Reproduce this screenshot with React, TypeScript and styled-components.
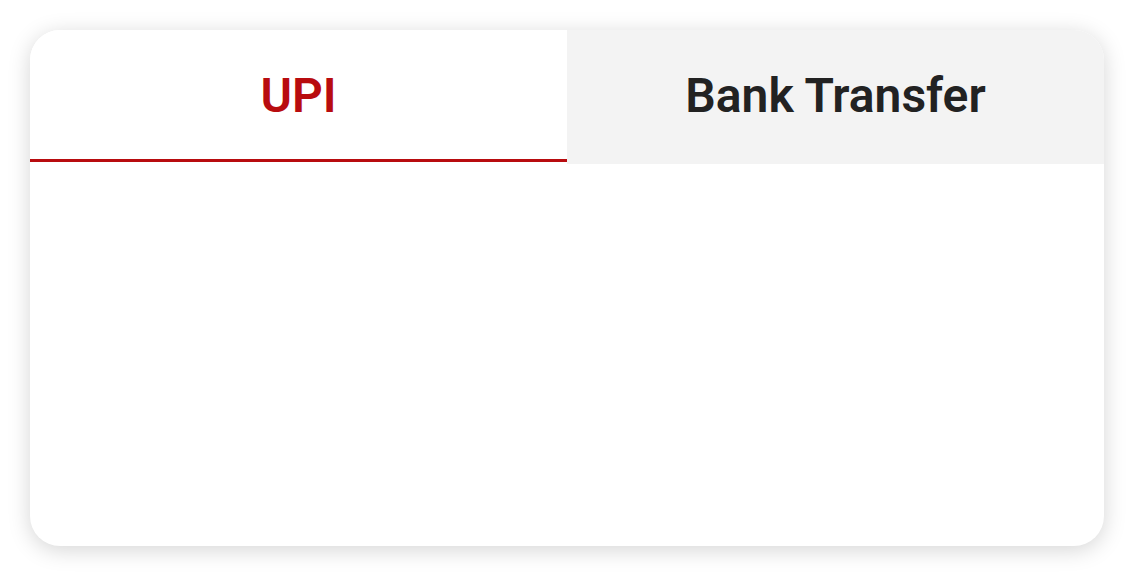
import { useState } from 'react';
import styled, { createGlobalStyle } from 'styled-components';

const GlobalStyle = createGlobalStyle`
  html, body {
    margin: 0;
    padding: 0;
    background: #ffffff;
    font-family: Roboto, "Liberation Sans", sans-serif;
  }
`;

const Page = styled.div`
  padding: 30px;
  width: 1074px;
`;

const Card = styled.div`
  height: 516px;
  background: #ffffff;
  border-radius: 30px;
  overflow: hidden;
  box-shadow: 0 4px 22px rgba(0, 0, 0, 0.17);
`;

const TabBar = styled.div`
  display: grid;
  grid-template-columns: 537px 1fr;
  height: 134px;
`;

const Tab = styled.button<{ $active: boolean }>`
  display: flex;
  flex-direction: column;
  border: none;
  margin: 0;
  padding: 0 0 2px;
  cursor: pointer;
  background: ${(p) => (p.$active ? '#ffffff' : '#f3f3f3')};
  font-family: inherit;
`;

const TabLabel = styled.span<{ $active: boolean }>`
  flex: 1;
  display: flex;
  align-items: center;
  justify-content: center;
  font-size: 48px;
  font-weight: 600;
  padding-top: 2px;
  color: ${(p) => (p.$active ? '#b80c0f' : '#222222')};
  border-bottom: 3px solid ${(p) => (p.$active ? '#b80c0f' : 'transparent')};
`;

const Panel = styled.div`
  flex: 1;
`;

const tabs = ['UPI', 'Bank Transfer'];

export default function App() {
  const [active, setActive] = useState(0);
  return (
    <>
      <GlobalStyle />
      <Page>
        <Card>
          <TabBar>
            {tabs.map((t, i) => (
              <Tab key={t} $active={i === active} onClick={() => setActive(i)}>
                <TabLabel $active={i === active}>{t}</TabLabel>
              </Tab>
            ))}
          </TabBar>
          <Panel />
        </Card>
      </Page>
    </>
  );
}
